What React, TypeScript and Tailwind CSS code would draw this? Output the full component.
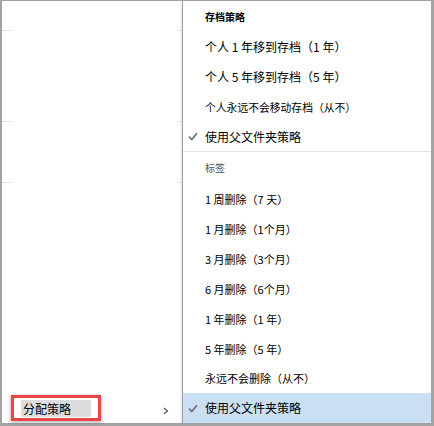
import React from 'react'

const font = { fontFamily: '"Noto Sans CJK SC", "Noto Sans", sans-serif' }

type Item = {
  label: string
  size: string
  h: string
  checked?: boolean
  active?: boolean
}

const archive: Item[] = [
  { label: '个人 1 年移到存档（1 年）', size: 'text-[12px]', h: 'h-[30px]' },
  { label: '个人 5 年移到存档（5 年）', size: 'text-[12px]', h: 'h-[30px]' },
  { label: '个人永远不会移动存档（从不）', size: 'text-[10.8px]', h: 'h-[30px]' },
  { label: '使用父文件夹策略', size: 'text-[12px]', h: 'h-[29px]', checked: true },
]

const tags: Item[] = [
  { label: '1 周删除（7 天）', size: 'text-[11px]', h: 'h-[30px]' },
  { label: '1 月删除（1个月）', size: 'text-[11px]', h: 'h-[30px]' },
  { label: '3 月删除（3个月）', size: 'text-[11px]', h: 'h-[30px]' },
  { label: '6 月删除（6个月）', size: 'text-[11px]', h: 'h-[30px]' },
  { label: '1 年删除（1 年）', size: 'text-[11px]', h: 'h-[30px]' },
  { label: '5 年删除（5 年）', size: 'text-[11px]', h: 'h-[30px]' },
  { label: '永远不会删除（从不）', size: 'text-[11px]', h: 'h-[29px]' },
  { label: '使用父文件夹策略', size: 'text-[12px]', h: 'h-[30px]', checked: true, active: true },
]

function Check() {
  return (
    <svg width="10" height="9" viewBox="0 0 10 9" className="ml-[5px]">
      <polyline points="1,4.5 3.8,7.5 9,1.2" fill="none" stroke="#6b6b6b" strokeWidth="1.6" />
    </svg>
  )
}

function Row({ item }: { item: Item }) {
  return (
    <div className={`${item.h} flex items-center ${item.active ? 'bg-[#cbdff4]' : ''}`}>
      <div className="w-[22px] flex items-center">{item.checked && <Check />}</div>
      <span className={`${item.size} text-black leading-none whitespace-nowrap`}>{item.label}</span>
    </div>
  )
}

function Ticks() {
  return (
    <div className="h-px flex justify-between">
      <span className="w-[10px] h-px bg-[#e4e4e4]" />
      <span className="w-[5px] h-px bg-[#e4e4e4]" />
    </div>
  )
}

export default function App() {
  return (
    <div
      style={font}
      className="w-[434px] h-[426px] flex bg-white border-l-2 border-t border-r-[3px] border-b-[3px] border-[#a3a3a3]"
    >
      {/* background list, mostly covered */}
      <div className="w-[180px] flex flex-col">
        <div className="h-[29px]" />
        <Ticks />
        <div className="h-[90px]" />
        <Ticks />
        <div className="h-[60px]" />
        <Ticks />
        <div className="flex-1" />
        <div className="h-[30px] flex items-start justify-between pr-[13px]">
          <div className="ml-[9px] mt-[2px] h-[26px] border-[3px] border-[#ec4348] px-[7px] pt-[2px] shadow-[0_1px_4px_rgba(0,0,0,0.35)]">
            <div className="w-[70px] h-[17px] bg-[#dcdcdc] flex items-center pl-[2px]">
              <span className="text-[12px] text-black leading-none">分配策略</span>
            </div>
          </div>
          <svg width="6" height="8" viewBox="0 0 6 8" className="mt-[14px]">
            <polyline points="1,1 4.5,4 1,7" fill="none" stroke="#555" strokeWidth="1.2" />
          </svg>
        </div>
      </div>

      <div className="w-px bg-[#a0a0a0] shadow-[-1px_0_2px_rgba(0,0,0,0.15)]" />

      {/* context submenu */}
      <div className="flex-1 flex flex-col">
        <div className="h-[31px] flex items-center pl-[22px]">
          <span className="text-[10px] font-bold text-black leading-none">存档策略</span>
        </div>
        {archive.map((it, i) => (
          <Row key={i} item={it} />
        ))}
        <div className="h-px bg-[#e2e2e2]" />
        <div className="h-[32px] flex items-center pl-[22px]">
          <span className="text-[10px] text-[#555] leading-none">标签</span>
        </div>
        {tags.map((it, i) => (
          <Row key={i} item={it} />
        ))}
      </div>
    </div>
  )
}
